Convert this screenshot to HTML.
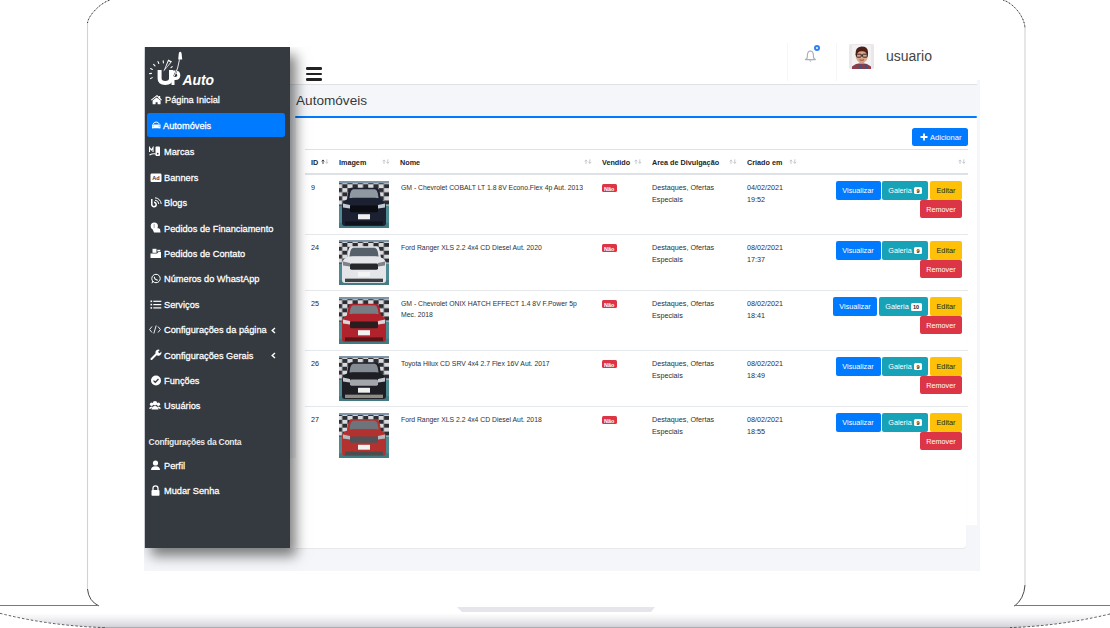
<!DOCTYPE html>
<html><head><meta charset="utf-8"><title>UP Auto</title>
<style>
html,body{margin:0;padding:0;}
body{width:1110px;height:628px;position:relative;overflow:hidden;background:#fff;font-family:"Liberation Sans", sans-serif;}
.a{position:absolute;}
.t{position:absolute;white-space:nowrap;line-height:1;}
</style></head><body>
<svg class="a" style="left:0;top:0" width="1110" height="628" viewBox="0 0 1110 628">
<defs>
<linearGradient id="base" x1="0" y1="0" x2="0" y2="1">
<stop offset="0" stop-color="#ffffff"/><stop offset="0.3" stop-color="#f4f4f6"/><stop offset="0.8" stop-color="#dcdbe0"/><stop offset="0.93" stop-color="#d2d1d7"/><stop offset="1" stop-color="#8c8a92"/>
</linearGradient>
</defs>
<path d="M87.5 589 L87.5 23" fill="none" stroke="#d2d2d2" stroke-width="1.1"/>
<path d="M87.5 23 C88 16 100 3 110 0" fill="none" stroke="#8a8a8a" stroke-width="0.7"/>
<path d="M87.5 23 C88 16 100 3 110 0" fill="none" stroke="#111" stroke-width="0.9" stroke-dasharray="0.9 2.6"/>
<path d="M1025 585 L1025 28" fill="none" stroke="#d2d2d2" stroke-width="1.1"/>
<path d="M1003 0 C1013 3 1024.5 16 1025 28" fill="none" stroke="#8a8a8a" stroke-width="0.7"/>
<path d="M1003 0 C1013 3 1024.5 16 1025 28" fill="none" stroke="#111" stroke-width="0.9" stroke-dasharray="0.9 2.6"/>
<path d="M87.5 589 Q88.5 601 99 606" fill="none" stroke="#333" stroke-width="0.9"/>
<path d="M1025 585 Q1024 599 1014.5 606" fill="none" stroke="#333" stroke-width="0.9"/>
<line x1="0" y1="605.5" x2="99" y2="605.5" stroke="#7a7a7a" stroke-width="1"/>
<line x1="1014" y1="605.5" x2="1110" y2="605.5" stroke="#7a7a7a" stroke-width="1"/>
<path d="M0 613 L1110 613 L1110 614 Q1060 626 1010 628 L105 628 Q50 626 0 613.3 Z" fill="url(#base)"/>
<path d="M0 613.3 Q50 626 105 627.6" fill="none" stroke="#333" stroke-width="0.8" stroke-dasharray="2.5 2"/>
<path d="M1110 614 Q1060 626 1010 627.6" fill="none" stroke="#333" stroke-width="0.8" stroke-dasharray="2.5 2"/>
<path d="M457 607 L655 607 L651 612 L462 612 Z" fill="#e6e5eb"/>
</svg>
<div class="a" style="left:144px;top:80px;width:836px;height:491px;background:#f4f6f9;"></div>
<div class="a" style="left:144px;top:47px;width:1px;height:501px;background:#d9dde3;"></div>
<div class="a" style="left:290px;top:45px;width:687px;height:39px;background:#ffffff;"></div>
<div class="a" style="left:290px;top:84px;width:687px;height:1px;background:#dee2e6;"></div>
<div class="a" style="left:295.5px;top:118px;width:681.5px;height:407px;background:#ffffff;"></div>
<div class="a" style="left:290px;top:458px;width:6px;height:90px;background:#ffffff;"></div>
<div class="a" style="left:295.5px;top:118px;width:670.5px;height:430px;background:#ffffff;border-bottom-right-radius:4px;box-shadow:0 1px 1px rgba(0,0,0,.06)"></div>
<div class="t" style="left:296.00px;top:93.89px;font-size:13.6px;color:#343a40;font-weight:normal;">Automóveis</div>
<div class="a" style="left:295px;top:116px;width:682px;height:2px;background:#007bff;border-radius:1px"></div>
<div class="a" style="left:305.5px;top:67px;width:16.2px;height:2.6px;background:#222;border-radius:1.3px"></div>
<div class="a" style="left:305.5px;top:72.6px;width:16.2px;height:2.6px;background:#222;border-radius:1.3px"></div>
<div class="a" style="left:305.5px;top:78.2px;width:16.2px;height:2.6px;background:#222;border-radius:1.3px"></div>
<div class="a" style="left:786.8px;top:43px;width:1.0px;height:38px;background:#f5f6f7;"></div>
<div class="a" style="left:835.6px;top:43px;width:1.0px;height:38px;background:#f5f6f7;"></div>
<svg class="a" style="left:803px;top:49px" width="16" height="15" viewBox="0 0 16 15">
<path d="M7.4 2 Q10.2 2.2 10.4 6 L10.6 8.8 Q11 10 12.4 10.6 L2.4 10.6 Q3.8 10 4.2 8.8 L4.4 6 Q4.6 2.2 7.4 2 Z" fill="none" stroke="#a9afb6" stroke-width="1.15" stroke-linejoin="round"/>
<path d="M6.2 11.6 L8.6 11.6 L7.4 13 Z" fill="#a9afb6"/>
</svg>
<div class="a" style="left:814.2px;top:44.8px;width:2.2px;height:2.2px;border:2px solid #2f7ff5;border-radius:50%;background:#fff"></div>
<svg class="a" style="left:849px;top:44px" width="25" height="25" viewBox="0 0 25 25">
<rect width="25" height="25" rx="1.5" fill="#e9e7e7"/>
<rect x="3" y="1" width="19" height="23" fill="#f3f1f1"/>
<path d="M7 20 Q12.5 18.5 18 20 L22 22.5 L22 25 L3 25 L3 22.5 Z" fill="#8b3d4a"/>
<path d="M9 21 L11 25 L13.5 25 L12 20.5 Z M15 20.5 L17 25 L19 25 L17.5 20.8 Z" fill="#3f5580"/>
<rect x="10.5" y="16" width="4.5" height="4" fill="#c98f77"/>
<ellipse cx="12.8" cy="11.4" rx="6.2" ry="7.4" fill="#dca68b"/>
<path d="M6.5 11 Q6 3 12.5 2.6 Q18.8 2.6 19 8 Q19.2 10 18.6 12 Q17.5 7 13 7.2 Q8 7 7.6 12 Z" fill="#4b2016"/>
<rect x="7.6" y="10.2" width="4.6" height="3" rx="0.8" fill="none" stroke="#2a1d1a" stroke-width="0.9"/><rect x="13.6" y="10.2" width="4.6" height="3" rx="0.8" fill="none" stroke="#2a1d1a" stroke-width="0.9"/><path d="M12.2 11 L13.6 11" stroke="#2a1d1a" stroke-width="0.8"/>
<path d="M10.5 15.8 Q12.8 16.8 15 15.8" fill="none" stroke="#8a3b30" stroke-width="0.9"/>
</svg>
<div class="t" style="left:886.00px;top:49.45px;font-size:14px;color:#444;font-weight:normal;">usuario</div>
<div class="a" style="left:912.4px;top:127.5px;width:55.60000000000002px;height:18.599999999999994px;background:#007bff;border-radius:2.5px"></div>
<svg class="a" style="left:919.5px;top:132.5px" width="8" height="8" viewBox="0 0 8 8"><path d="M4 0.5 L4 7.5 M0.5 4 L7.5 4" stroke="#fff" stroke-width="1.8"/></svg>
<div class="t" style="left:930.00px;top:133.51px;font-size:7.55px;color:#fff;font-weight:normal;">Adicionar</div>
<div class="a" style="left:305px;top:149px;width:663px;height:1px;background:#dee2e6;"></div>
<div class="a" style="left:305px;top:173px;width:663px;height:2px;background:#dee2e6;"></div>
<div class="t" style="left:311.20px;top:159.18px;font-size:7.7px;color:#212529;font-weight:bold;transform:scaleX(0.94);transform-origin:0 0;">ID</div>
<svg class="a" style="left:320.5px;top:159.4px" width="8" height="6" viewBox="0 0 8 6"><path d="M2 5 L2 1 M0.7 2.4 L2 0.9 L3.3 2.4" fill="none" stroke="#3a3f44" stroke-width="0.95"/><path d="M5.8 0.3 L5.8 4.3 M4.5 2.9 L5.8 4.4 L7.1 2.9" fill="none" stroke="#c3c7cb" stroke-width="0.95"/></svg>
<div class="t" style="left:339.10px;top:159.18px;font-size:7.7px;color:#212529;font-weight:bold;transform:scaleX(0.94);transform-origin:0 0;">Imagem</div>
<svg class="a" style="left:382px;top:159.4px" width="8" height="6" viewBox="0 0 8 6"><path d="M2 5 L2 1 M0.7 2.4 L2 0.9 L3.3 2.4" fill="none" stroke="#c3c7cb" stroke-width="0.95"/><path d="M5.8 0.3 L5.8 4.3 M4.5 2.9 L5.8 4.4 L7.1 2.9" fill="none" stroke="#c3c7cb" stroke-width="0.95"/></svg>
<div class="t" style="left:400.40px;top:159.18px;font-size:7.7px;color:#212529;font-weight:bold;transform:scaleX(0.94);transform-origin:0 0;">Nome</div>
<svg class="a" style="left:583.5px;top:159.4px" width="8" height="6" viewBox="0 0 8 6"><path d="M2 5 L2 1 M0.7 2.4 L2 0.9 L3.3 2.4" fill="none" stroke="#c3c7cb" stroke-width="0.95"/><path d="M5.8 0.3 L5.8 4.3 M4.5 2.9 L5.8 4.4 L7.1 2.9" fill="none" stroke="#c3c7cb" stroke-width="0.95"/></svg>
<div class="t" style="left:601.90px;top:159.18px;font-size:7.7px;color:#212529;font-weight:bold;transform:scaleX(0.94);transform-origin:0 0;">Vendido</div>
<svg class="a" style="left:633.7px;top:159.4px" width="8" height="6" viewBox="0 0 8 6"><path d="M2 5 L2 1 M0.7 2.4 L2 0.9 L3.3 2.4" fill="none" stroke="#c3c7cb" stroke-width="0.95"/><path d="M5.8 0.3 L5.8 4.3 M4.5 2.9 L5.8 4.4 L7.1 2.9" fill="none" stroke="#c3c7cb" stroke-width="0.95"/></svg>
<div class="t" style="left:651.50px;top:159.18px;font-size:7.7px;color:#212529;font-weight:bold;transform:scaleX(0.94);transform-origin:0 0;">Area de Divulgação</div>
<svg class="a" style="left:728.8px;top:159.4px" width="8" height="6" viewBox="0 0 8 6"><path d="M2 5 L2 1 M0.7 2.4 L2 0.9 L3.3 2.4" fill="none" stroke="#c3c7cb" stroke-width="0.95"/><path d="M5.8 0.3 L5.8 4.3 M4.5 2.9 L5.8 4.4 L7.1 2.9" fill="none" stroke="#c3c7cb" stroke-width="0.95"/></svg>
<div class="t" style="left:746.60px;top:159.18px;font-size:7.7px;color:#212529;font-weight:bold;transform:scaleX(0.94);transform-origin:0 0;">Criado em</div>
<svg class="a" style="left:789.2px;top:159.4px" width="8" height="6" viewBox="0 0 8 6"><path d="M2 5 L2 1 M0.7 2.4 L2 0.9 L3.3 2.4" fill="none" stroke="#c3c7cb" stroke-width="0.95"/><path d="M5.8 0.3 L5.8 4.3 M4.5 2.9 L5.8 4.4 L7.1 2.9" fill="none" stroke="#c3c7cb" stroke-width="0.95"/></svg>
<svg class="a" style="left:957.5px;top:159.4px" width="8" height="6" viewBox="0 0 8 6"><path d="M2 5 L2 1 M0.7 2.4 L2 0.9 L3.3 2.4" fill="none" stroke="#c3c7cb" stroke-width="0.95"/><path d="M5.8 0.3 L5.8 4.3 M4.5 2.9 L5.8 4.4 L7.1 2.9" fill="none" stroke="#c3c7cb" stroke-width="0.95"/></svg>
<div class="t" style="left:310.90px;top:183.65px;font-size:7.5px;color:#212529;font-weight:normal;transform:scaleX(0.96);transform-origin:0 0;">9</div>
<svg class="a" style="left:339px;top:181px" width="50" height="47" viewBox="0 0 50 46" preserveAspectRatio="none">
<defs><pattern id="chk181" width="10.4" height="8" patternUnits="userSpaceOnUse" x="-2" y="-1"><rect width="10.4" height="8" fill="#d9dade"/><rect width="5.2" height="4" fill="#2d2e33"/><rect x="5.2" y="4" width="5.2" height="4" fill="#2d2e33"/></pattern></defs>
<rect width="50" height="46" fill="#4f8a92"/><rect width="50" height="2" fill="#7f95a8"/>
<rect y="2" width="50" height="22" fill="url(#chk181)"/>
<rect y="41" width="50" height="5" fill="#3c727a" opacity="0.6"/>
<path d="M12 6.5 L38 6.5 Q40 7 41 12 L42 19 L8 19 L9 12 Q10 7 12 6.5 Z" fill="#1b2131"/>
<path d="M14 8 L36 8 Q38 8.5 38.8 12 L39.6 17 L10.4 17 L11.2 12 Q12 8.5 14 8 Z" fill="#8f98a1"/>
<path d="M6 19 Q9 16.5 14 16.5 L36 16.5 Q41 16.5 44 19 Q47 21 47 25 L47 41 Q47 44 44 44 L6 44 Q3 44 3 41 L3 25 Q3 21 6 19 Z" fill="#1b2131"/>
<rect x="11" y="24" width="28" height="6.5" rx="1.5" fill="#0b0d12"/>
<path d="M4 22 L11 23.5 L11 27 L4 26 Z" fill="#c3c9d0"/>
<path d="M46 22 L39 23.5 L39 27 L46 26 Z" fill="#c3c9d0"/>
<rect x="19" y="32.5" width="12" height="5" fill="#f0f0f0"/>
<rect x="6" y="39.5" width="38" height="3.5" fill="#10131b"/>
</svg>
<div class="t" style="left:400.60px;top:183.65px;font-size:7.5px;color:#2b3035;font-weight:normal;transform:scaleX(0.91);transform-origin:0 0;">GM - Chevrolet COBALT LT 1.8 8V Econo.Flex 4p Aut. 2013</div>
<div class="a" style="left:601.9px;top:183.6px;width:15px;height:8.5px;background:#dc3545;border-radius:1.5px"></div>
<div class="t" style="left:604.40px;top:186.15px;font-size:6.2px;color:#fff;font-weight:bold;transform:scaleX(0.88);transform-origin:0 0;">Não</div>
<div class="t" style="left:651.50px;top:183.65px;font-size:7.5px;color:#2b3035;font-weight:normal;transform:scaleX(0.96);transform-origin:0 0;">Destaques, Ofertas</div>
<div class="t" style="left:651.50px;top:195.55px;font-size:7.5px;color:#2b3035;font-weight:normal;transform:scaleX(0.96);transform-origin:0 0;">Especiais</div>
<div class="t" style="left:746.60px;top:183.65px;font-size:7.5px;color:#2b3035;font-weight:normal;transform:scaleX(0.96);transform-origin:0 0;">04/02/2021</div>
<div class="t" style="left:746.60px;top:195.55px;font-size:7.5px;color:#2b3035;font-weight:normal;transform:scaleX(0.96);transform-origin:0 0;">19:52</div>
<div class="a" style="left:836px;top:181.2px;width:44.700000000000045px;height:18.69999999999999px;background:#007bff;border-radius:2px"></div>
<div class="t" style="left:798.35px;top:187.00px;width:120px;text-align:center;font-size:7.8px;color:#fff;font-weight:normal;transform:scaleX(0.93);transform-origin:50% 0;">Visualizar</div>
<div class="a" style="left:882.1px;top:181.2px;width:45.89999999999998px;height:18.69999999999999px;background:#17a2b8;border-radius:2px"></div>
<div class="t" style="left:840.30px;top:187.00px;width:120px;text-align:center;font-size:7.8px;color:#fff;font-weight:normal;transform:scaleX(0.93);transform-origin:50% 0;">Galeria</div>
<div class="a" style="left:913.9px;top:186.89999999999998px;width:7.800000000000068px;height:7.600000000000023px;background:#fff;border-radius:1.5px"></div>
<div class="t" style="left:857.80px;top:189.19px;width:120px;text-align:center;font-size:5.8px;color:#212529;font-weight:bold;transform:scaleX(0.95);transform-origin:50% 0;">9</div>
<div class="a" style="left:929.7px;top:181.2px;width:32.5px;height:18.69999999999999px;background:#ffc107;border-radius:2px"></div>
<div class="t" style="left:885.95px;top:187.00px;width:120px;text-align:center;font-size:7.8px;color:#212529;font-weight:normal;transform:scaleX(0.93);transform-origin:50% 0;">Editar</div>
<div class="a" style="left:920px;top:200.1px;width:42.200000000000045px;height:18.19999999999999px;background:#dc3545;border-radius:2px"></div>
<div class="t" style="left:881.10px;top:205.70px;width:120px;text-align:center;font-size:7.8px;color:#fff;font-weight:normal;transform:scaleX(0.93);transform-origin:50% 0;">Remover</div>
<div class="a" style="left:305px;top:234px;width:663px;height:1px;background:#e6e9ec;"></div>
<div class="t" style="left:310.90px;top:243.65px;font-size:7.5px;color:#212529;font-weight:normal;transform:scaleX(0.96);transform-origin:0 0;">24</div>
<svg class="a" style="left:339px;top:240px" width="50" height="45" viewBox="0 0 50 46" preserveAspectRatio="none">
<defs><pattern id="chk240" width="10.4" height="8" patternUnits="userSpaceOnUse" x="-2" y="-1"><rect width="10.4" height="8" fill="#d9dade"/><rect width="5.2" height="4" fill="#2d2e33"/><rect x="5.2" y="4" width="5.2" height="4" fill="#2d2e33"/></pattern></defs>
<rect width="50" height="46" fill="#4f8a92"/><rect width="50" height="2" fill="#7f95a8"/>
<rect y="2" width="50" height="22" fill="url(#chk240)"/>
<rect y="41" width="50" height="5" fill="#3c727a" opacity="0.6"/>
<path d="M12 6.5 L38 6.5 Q40 7 41 12 L42 19 L8 19 L9 12 Q10 7 12 6.5 Z" fill="#e4e5e8"/>
<path d="M14 8 L36 8 Q38 8.5 38.8 12 L39.6 17 L10.4 17 L11.2 12 Q12 8.5 14 8 Z" fill="#55606b"/>
<path d="M6 19 Q9 16.5 14 16.5 L36 16.5 Q41 16.5 44 19 Q47 21 47 25 L47 41 Q47 44 44 44 L6 44 Q3 44 3 41 L3 25 Q3 21 6 19 Z" fill="#e4e5e8"/>
<rect x="11" y="24" width="28" height="6.5" rx="1.5" fill="#24272c"/>
<path d="M4 22 L11 23.5 L11 27 L4 26 Z" fill="#7d828a"/>
<path d="M46 22 L39 23.5 L39 27 L46 26 Z" fill="#7d828a"/>
<rect x="19" y="32.5" width="12" height="5" fill="#f5f5f5"/>
<rect x="6" y="39.5" width="38" height="3.5" fill="#3b3f44"/>
</svg>
<div class="t" style="left:400.60px;top:243.65px;font-size:7.5px;color:#2b3035;font-weight:normal;transform:scaleX(0.91);transform-origin:0 0;">Ford Ranger XLS 2.2 4x4 CD Diesel Aut. 2020</div>
<div class="a" style="left:601.9px;top:243.6px;width:15px;height:8.5px;background:#dc3545;border-radius:1.5px"></div>
<div class="t" style="left:604.40px;top:246.15px;font-size:6.2px;color:#fff;font-weight:bold;transform:scaleX(0.88);transform-origin:0 0;">Não</div>
<div class="t" style="left:651.50px;top:243.65px;font-size:7.5px;color:#2b3035;font-weight:normal;transform:scaleX(0.96);transform-origin:0 0;">Destaques, Ofertas</div>
<div class="t" style="left:651.50px;top:255.55px;font-size:7.5px;color:#2b3035;font-weight:normal;transform:scaleX(0.96);transform-origin:0 0;">Especiais</div>
<div class="t" style="left:746.60px;top:243.65px;font-size:7.5px;color:#2b3035;font-weight:normal;transform:scaleX(0.96);transform-origin:0 0;">08/02/2021</div>
<div class="t" style="left:746.60px;top:255.55px;font-size:7.5px;color:#2b3035;font-weight:normal;transform:scaleX(0.96);transform-origin:0 0;">17:37</div>
<div class="a" style="left:836px;top:241.2px;width:44.700000000000045px;height:18.69999999999999px;background:#007bff;border-radius:2px"></div>
<div class="t" style="left:798.35px;top:247.00px;width:120px;text-align:center;font-size:7.8px;color:#fff;font-weight:normal;transform:scaleX(0.93);transform-origin:50% 0;">Visualizar</div>
<div class="a" style="left:882.1px;top:241.2px;width:45.89999999999998px;height:18.69999999999999px;background:#17a2b8;border-radius:2px"></div>
<div class="t" style="left:840.30px;top:247.00px;width:120px;text-align:center;font-size:7.8px;color:#fff;font-weight:normal;transform:scaleX(0.93);transform-origin:50% 0;">Galeria</div>
<div class="a" style="left:913.9px;top:246.89999999999998px;width:7.800000000000068px;height:7.600000000000023px;background:#fff;border-radius:1.5px"></div>
<div class="t" style="left:857.80px;top:249.19px;width:120px;text-align:center;font-size:5.8px;color:#212529;font-weight:bold;transform:scaleX(0.95);transform-origin:50% 0;">9</div>
<div class="a" style="left:929.7px;top:241.2px;width:32.5px;height:18.69999999999999px;background:#ffc107;border-radius:2px"></div>
<div class="t" style="left:885.95px;top:247.00px;width:120px;text-align:center;font-size:7.8px;color:#212529;font-weight:normal;transform:scaleX(0.93);transform-origin:50% 0;">Editar</div>
<div class="a" style="left:920px;top:260.09999999999997px;width:42.200000000000045px;height:18.200000000000045px;background:#dc3545;border-radius:2px"></div>
<div class="t" style="left:881.10px;top:265.70px;width:120px;text-align:center;font-size:7.8px;color:#fff;font-weight:normal;transform:scaleX(0.93);transform-origin:50% 0;">Remover</div>
<div class="a" style="left:305px;top:290px;width:663px;height:1px;background:#e6e9ec;"></div>
<div class="t" style="left:310.90px;top:299.65px;font-size:7.5px;color:#212529;font-weight:normal;transform:scaleX(0.96);transform-origin:0 0;">25</div>
<svg class="a" style="left:339px;top:297px" width="50" height="47" viewBox="0 0 50 46" preserveAspectRatio="none">
<defs><pattern id="chk297" width="10.4" height="8" patternUnits="userSpaceOnUse" x="-2" y="-1"><rect width="10.4" height="8" fill="#d9dade"/><rect width="5.2" height="4" fill="#2d2e33"/><rect x="5.2" y="4" width="5.2" height="4" fill="#2d2e33"/></pattern></defs>
<rect width="50" height="46" fill="#4f8a92"/><rect width="50" height="2" fill="#7f95a8"/>
<rect y="2" width="50" height="22" fill="url(#chk297)"/>
<rect y="41" width="50" height="5" fill="#3c727a" opacity="0.6"/>
<path d="M12 6.5 L38 6.5 Q40 7 41 12 L42 19 L8 19 L9 12 Q10 7 12 6.5 Z" fill="#b1232c"/>
<path d="M14 8 L36 8 Q38 8.5 38.8 12 L39.6 17 L10.4 17 L11.2 12 Q12 8.5 14 8 Z" fill="#787d84"/>
<path d="M6 19 Q9 16.5 14 16.5 L36 16.5 Q41 16.5 44 19 Q47 21 47 25 L47 41 Q47 44 44 44 L6 44 Q3 44 3 41 L3 25 Q3 21 6 19 Z" fill="#b1232c"/>
<rect x="11" y="24" width="28" height="6.5" rx="1.5" fill="#2b1c1e"/>
<path d="M4 22 L11 23.5 L11 27 L4 26 Z" fill="#d5d6da"/>
<path d="M46 22 L39 23.5 L39 27 L46 26 Z" fill="#d5d6da"/>
<rect x="19" y="32.5" width="12" height="5" fill="#f2f2f2"/>
<rect x="6" y="39.5" width="38" height="3.5" fill="#5a1418"/>
</svg>
<div class="t" style="left:400.60px;top:299.65px;font-size:7.5px;color:#2b3035;font-weight:normal;transform:scaleX(0.91);transform-origin:0 0;">GM - Chevrolet ONIX HATCH EFFECT 1.4 8V F.Power 5p</div>
<div class="t" style="left:400.60px;top:311.45px;font-size:7.5px;color:#2b3035;font-weight:normal;transform:scaleX(0.91);transform-origin:0 0;">Mec. 2018</div>
<div class="a" style="left:601.9px;top:299.6px;width:15px;height:8.5px;background:#dc3545;border-radius:1.5px"></div>
<div class="t" style="left:604.40px;top:302.15px;font-size:6.2px;color:#fff;font-weight:bold;transform:scaleX(0.88);transform-origin:0 0;">Não</div>
<div class="t" style="left:651.50px;top:299.65px;font-size:7.5px;color:#2b3035;font-weight:normal;transform:scaleX(0.96);transform-origin:0 0;">Destaques, Ofertas</div>
<div class="t" style="left:651.50px;top:311.55px;font-size:7.5px;color:#2b3035;font-weight:normal;transform:scaleX(0.96);transform-origin:0 0;">Especiais</div>
<div class="t" style="left:746.60px;top:299.65px;font-size:7.5px;color:#2b3035;font-weight:normal;transform:scaleX(0.96);transform-origin:0 0;">08/02/2021</div>
<div class="t" style="left:746.60px;top:311.55px;font-size:7.5px;color:#2b3035;font-weight:normal;transform:scaleX(0.96);transform-origin:0 0;">18:41</div>
<div class="a" style="left:833.1px;top:297.2px;width:43.89999999999998px;height:18.69999999999999px;background:#007bff;border-radius:2px"></div>
<div class="t" style="left:795.05px;top:303.00px;width:120px;text-align:center;font-size:7.8px;color:#fff;font-weight:normal;transform:scaleX(0.93);transform-origin:50% 0;">Visualizar</div>
<div class="a" style="left:879.2px;top:297.2px;width:48.59999999999991px;height:18.69999999999999px;background:#17a2b8;border-radius:2px"></div>
<div class="t" style="left:837.20px;top:303.00px;width:120px;text-align:center;font-size:7.8px;color:#fff;font-weight:normal;transform:scaleX(0.93);transform-origin:50% 0;">Galeria</div>
<div class="a" style="left:910.6px;top:303.4px;width:11.100000000000023px;height:7.800000000000011px;background:#fff;border-radius:1.5px"></div>
<div class="t" style="left:856.20px;top:305.19px;width:120px;text-align:center;font-size:5.8px;color:#212529;font-weight:bold;transform:scaleX(0.95);transform-origin:50% 0;">10</div>
<div class="a" style="left:929.7px;top:297.2px;width:32.5px;height:18.69999999999999px;background:#ffc107;border-radius:2px"></div>
<div class="t" style="left:885.95px;top:303.00px;width:120px;text-align:center;font-size:7.8px;color:#212529;font-weight:normal;transform:scaleX(0.93);transform-origin:50% 0;">Editar</div>
<div class="a" style="left:920px;top:316.09999999999997px;width:42.200000000000045px;height:18.200000000000045px;background:#dc3545;border-radius:2px"></div>
<div class="t" style="left:881.10px;top:321.70px;width:120px;text-align:center;font-size:7.8px;color:#fff;font-weight:normal;transform:scaleX(0.93);transform-origin:50% 0;">Remover</div>
<div class="a" style="left:305px;top:350px;width:663px;height:1px;background:#e6e9ec;"></div>
<div class="t" style="left:310.90px;top:359.65px;font-size:7.5px;color:#212529;font-weight:normal;transform:scaleX(0.96);transform-origin:0 0;">26</div>
<svg class="a" style="left:339px;top:356px" width="50" height="45" viewBox="0 0 50 46" preserveAspectRatio="none">
<defs><pattern id="chk356" width="10.4" height="8" patternUnits="userSpaceOnUse" x="-2" y="-1"><rect width="10.4" height="8" fill="#d9dade"/><rect width="5.2" height="4" fill="#2d2e33"/><rect x="5.2" y="4" width="5.2" height="4" fill="#2d2e33"/></pattern></defs>
<rect width="50" height="46" fill="#4f8a92"/><rect width="50" height="2" fill="#7f95a8"/>
<rect y="2" width="50" height="22" fill="url(#chk356)"/>
<rect y="41" width="50" height="5" fill="#3c727a" opacity="0.6"/>
<path d="M12 6.5 L38 6.5 Q40 7 41 12 L42 19 L8 19 L9 12 Q10 7 12 6.5 Z" fill="#1d1f24"/>
<path d="M14 8 L36 8 Q38 8.5 38.8 12 L39.6 17 L10.4 17 L11.2 12 Q12 8.5 14 8 Z" fill="#858b93"/>
<path d="M6 19 Q9 16.5 14 16.5 L36 16.5 Q41 16.5 44 19 Q47 21 47 25 L47 41 Q47 44 44 44 L6 44 Q3 44 3 41 L3 25 Q3 21 6 19 Z" fill="#1d1f24"/>
<rect x="11" y="24" width="28" height="6.5" rx="1.5" fill="#a3a7ac"/>
<path d="M4 22 L11 23.5 L11 27 L4 26 Z" fill="#c6cad0"/>
<path d="M46 22 L39 23.5 L39 27 L46 26 Z" fill="#c6cad0"/>
<rect x="19" y="32.5" width="12" height="5" fill="#efefef"/>
<rect x="6" y="39.5" width="38" height="3.5" fill="#8f8c84"/>
</svg>
<div class="t" style="left:400.60px;top:359.65px;font-size:7.5px;color:#2b3035;font-weight:normal;transform:scaleX(0.91);transform-origin:0 0;">Toyota Hilux CD SRV 4x4 2.7 Flex 16V Aut. 2017</div>
<div class="a" style="left:601.9px;top:359.6px;width:15px;height:8.5px;background:#dc3545;border-radius:1.5px"></div>
<div class="t" style="left:604.40px;top:362.15px;font-size:6.2px;color:#fff;font-weight:bold;transform:scaleX(0.88);transform-origin:0 0;">Não</div>
<div class="t" style="left:651.50px;top:359.65px;font-size:7.5px;color:#2b3035;font-weight:normal;transform:scaleX(0.96);transform-origin:0 0;">Destaques, Ofertas</div>
<div class="t" style="left:651.50px;top:371.55px;font-size:7.5px;color:#2b3035;font-weight:normal;transform:scaleX(0.96);transform-origin:0 0;">Especiais</div>
<div class="t" style="left:746.60px;top:359.65px;font-size:7.5px;color:#2b3035;font-weight:normal;transform:scaleX(0.96);transform-origin:0 0;">08/02/2021</div>
<div class="t" style="left:746.60px;top:371.55px;font-size:7.5px;color:#2b3035;font-weight:normal;transform:scaleX(0.96);transform-origin:0 0;">18:49</div>
<div class="a" style="left:836px;top:357.2px;width:44.700000000000045px;height:18.69999999999999px;background:#007bff;border-radius:2px"></div>
<div class="t" style="left:798.35px;top:363.00px;width:120px;text-align:center;font-size:7.8px;color:#fff;font-weight:normal;transform:scaleX(0.93);transform-origin:50% 0;">Visualizar</div>
<div class="a" style="left:882.1px;top:357.2px;width:45.89999999999998px;height:18.69999999999999px;background:#17a2b8;border-radius:2px"></div>
<div class="t" style="left:840.30px;top:363.00px;width:120px;text-align:center;font-size:7.8px;color:#fff;font-weight:normal;transform:scaleX(0.93);transform-origin:50% 0;">Galeria</div>
<div class="a" style="left:913.9px;top:362.9px;width:7.800000000000068px;height:7.600000000000023px;background:#fff;border-radius:1.5px"></div>
<div class="t" style="left:857.80px;top:365.19px;width:120px;text-align:center;font-size:5.8px;color:#212529;font-weight:bold;transform:scaleX(0.95);transform-origin:50% 0;">9</div>
<div class="a" style="left:929.7px;top:357.2px;width:32.5px;height:18.69999999999999px;background:#ffc107;border-radius:2px"></div>
<div class="t" style="left:885.95px;top:363.00px;width:120px;text-align:center;font-size:7.8px;color:#212529;font-weight:normal;transform:scaleX(0.93);transform-origin:50% 0;">Editar</div>
<div class="a" style="left:920px;top:376.09999999999997px;width:42.200000000000045px;height:18.200000000000045px;background:#dc3545;border-radius:2px"></div>
<div class="t" style="left:881.10px;top:381.70px;width:120px;text-align:center;font-size:7.8px;color:#fff;font-weight:normal;transform:scaleX(0.93);transform-origin:50% 0;">Remover</div>
<div class="a" style="left:305px;top:406px;width:663px;height:1px;background:#e6e9ec;"></div>
<div class="t" style="left:310.90px;top:415.65px;font-size:7.5px;color:#212529;font-weight:normal;transform:scaleX(0.96);transform-origin:0 0;">27</div>
<svg class="a" style="left:339px;top:413px" width="50" height="45" viewBox="0 0 50 46" preserveAspectRatio="none">
<defs><pattern id="chk413" width="10.4" height="8" patternUnits="userSpaceOnUse" x="-2" y="-1"><rect width="10.4" height="8" fill="#d9dade"/><rect width="5.2" height="4" fill="#2d2e33"/><rect x="5.2" y="4" width="5.2" height="4" fill="#2d2e33"/></pattern></defs>
<rect width="50" height="46" fill="#4f8a92"/><rect width="50" height="2" fill="#7f95a8"/>
<rect y="2" width="50" height="22" fill="url(#chk413)"/>
<rect y="41" width="50" height="5" fill="#3c727a" opacity="0.6"/>
<path d="M12 6.5 L38 6.5 Q40 7 41 12 L42 19 L8 19 L9 12 Q10 7 12 6.5 Z" fill="#b3312f"/>
<path d="M14 8 L36 8 Q38 8.5 38.8 12 L39.6 17 L10.4 17 L11.2 12 Q12 8.5 14 8 Z" fill="#6e747b"/>
<path d="M6 19 Q9 16.5 14 16.5 L36 16.5 Q41 16.5 44 19 Q47 21 47 25 L47 41 Q47 44 44 44 L6 44 Q3 44 3 41 L3 25 Q3 21 6 19 Z" fill="#b3312f"/>
<rect x="11" y="24" width="28" height="6.5" rx="1.5" fill="#505257"/>
<path d="M4 22 L11 23.5 L11 27 L4 26 Z" fill="#b5bac0"/>
<path d="M46 22 L39 23.5 L39 27 L46 26 Z" fill="#b5bac0"/>
<rect x="19" y="32.5" width="12" height="5" fill="#f2f2f2"/>
<rect x="6" y="39.5" width="38" height="3.5" fill="#4a4c50"/>
</svg>
<div class="t" style="left:400.60px;top:415.65px;font-size:7.5px;color:#2b3035;font-weight:normal;transform:scaleX(0.91);transform-origin:0 0;">Ford Ranger XLS 2.2 4x4 CD Diesel Aut. 2018</div>
<div class="a" style="left:601.9px;top:415.6px;width:15px;height:8.5px;background:#dc3545;border-radius:1.5px"></div>
<div class="t" style="left:604.40px;top:418.15px;font-size:6.2px;color:#fff;font-weight:bold;transform:scaleX(0.88);transform-origin:0 0;">Não</div>
<div class="t" style="left:651.50px;top:415.65px;font-size:7.5px;color:#2b3035;font-weight:normal;transform:scaleX(0.96);transform-origin:0 0;">Destaques, Ofertas</div>
<div class="t" style="left:651.50px;top:427.55px;font-size:7.5px;color:#2b3035;font-weight:normal;transform:scaleX(0.96);transform-origin:0 0;">Especiais</div>
<div class="t" style="left:746.60px;top:415.65px;font-size:7.5px;color:#2b3035;font-weight:normal;transform:scaleX(0.96);transform-origin:0 0;">08/02/2021</div>
<div class="t" style="left:746.60px;top:427.55px;font-size:7.5px;color:#2b3035;font-weight:normal;transform:scaleX(0.96);transform-origin:0 0;">18:55</div>
<div class="a" style="left:836px;top:413.2px;width:44.700000000000045px;height:18.69999999999999px;background:#007bff;border-radius:2px"></div>
<div class="t" style="left:798.35px;top:419.00px;width:120px;text-align:center;font-size:7.8px;color:#fff;font-weight:normal;transform:scaleX(0.93);transform-origin:50% 0;">Visualizar</div>
<div class="a" style="left:882.1px;top:413.2px;width:45.89999999999998px;height:18.69999999999999px;background:#17a2b8;border-radius:2px"></div>
<div class="t" style="left:840.30px;top:419.00px;width:120px;text-align:center;font-size:7.8px;color:#fff;font-weight:normal;transform:scaleX(0.93);transform-origin:50% 0;">Galeria</div>
<div class="a" style="left:913.9px;top:418.9px;width:7.800000000000068px;height:7.600000000000023px;background:#fff;border-radius:1.5px"></div>
<div class="t" style="left:857.80px;top:421.19px;width:120px;text-align:center;font-size:5.8px;color:#212529;font-weight:bold;transform:scaleX(0.95);transform-origin:50% 0;">9</div>
<div class="a" style="left:929.7px;top:413.2px;width:32.5px;height:18.69999999999999px;background:#ffc107;border-radius:2px"></div>
<div class="t" style="left:885.95px;top:419.00px;width:120px;text-align:center;font-size:7.8px;color:#212529;font-weight:normal;transform:scaleX(0.93);transform-origin:50% 0;">Editar</div>
<div class="a" style="left:920px;top:432.09999999999997px;width:42.200000000000045px;height:18.200000000000045px;background:#dc3545;border-radius:2px"></div>
<div class="t" style="left:881.10px;top:437.70px;width:120px;text-align:center;font-size:7.8px;color:#fff;font-weight:normal;transform:scaleX(0.93);transform-origin:50% 0;">Remover</div>
<div class="a" style="left:144px;top:47px;width:836px;height:524px;overflow:hidden"><div class="a" style="left:-144px;top:-47px;width:1110px;height:628px">
<div class="a" style="left:145px;top:47px;width:145px;height:501px;background:#343a40;box-shadow:6px 8px 12px rgba(0,0,0,.5)"></div>
<div class="a" style="left:147px;top:113.3px;width:138.39999999999998px;height:23.500000000000014px;background:#007bff;border-radius:2.5px"></div>
<svg class="a" style="left:147px;top:50px" width="70" height="38" viewBox="0 0 70 38">
<g stroke="#fff" stroke-width="1.1" stroke-linecap="round">
<line x1="3.5" y1="28.6" x2="5.2" y2="27.6"/>
<line x1="2.6" y1="23.6" x2="4.5" y2="23.4"/>
<line x1="3.6" y1="18.6" x2="5.4" y2="19.4"/>
<line x1="6.6" y1="14.4" x2="8" y2="15.9"/>
<line x1="11" y1="11.6" x2="11.8" y2="13.5"/>
<line x1="16.2" y1="10.8" x2="16.4" y2="12.9"/>
<line x1="24" y1="17.6" x2="25.2" y2="16.6"/>
</g>
<path d="M16.3 21.8 L21.2 9.6 L25 11.6 Z" fill="#fff"/>
<path d="M18.2 19 L21.6 11.3 L23.4 12.2 Z" fill="#343a40"/>
<path d="M12.6 20 L12.6 28.6 Q12.6 32.9 18.3 32.9 Q24 32.9 24 28.6 L24 20" fill="none" stroke="#fff" stroke-width="4"/>
<path d="M26 35 L26 22 L28.4 22 Q31.8 22 31.8 25.2 Q31.8 28.4 28.4 28.4 L26 28.4" fill="none" stroke="#fff" stroke-width="3"/>
<path d="M27 26.5 Q31.5 18 32.5 9.5" fill="none" stroke="#343a40" stroke-width="1.7"/>
<path d="M27 26.5 Q31.5 18 32.5 9.5" fill="none" stroke="#fff" stroke-width="0.9"/>
<path d="M31.2 9.4 L31.6 5.2 Q31.8 1.8 33.2 1.8 Q34.6 1.8 34.8 5.2 L35.2 9.4 Z" fill="#fff"/>
</svg>
<div class="t" style="left:182.40px;top:73.83px;font-size:13.9px;color:#fff;font-weight:bold;font-style:italic">Auto</div>
<svg class="a" style="left:149.5px;top:93.5px" width="12" height="11" viewBox="0 0 12 11"><path d="M1.3 6.1 L7 1.6 L11.5 6.1" fill="none" stroke="#fff" stroke-width="1.1" stroke-linejoin="round"/><rect x="8.6" y="2" width="1.6" height="2.8" fill="#fff"/><path d="M2.6 6.6 L6.6 3.4 L10.6 6.6 L10.6 10.3 L7.6 10.3 L7.6 8.2 L5.6 8.2 L5.6 10.3 L2.6 10.3 Z" fill="#fff"/></svg>
<div class="t" style="left:164.50px;top:94.62px;font-size:9.9px;color:#fff;font-weight:normal;transform:scaleX(0.935);transform-origin:0 0;-webkit-text-stroke:0.28px #fff">Página Inicial</div>
<svg class="a" style="left:149.5px;top:119.80000000000001px" width="12" height="11" viewBox="0 0 12 11"><path d="M3.2 4 Q4 2 6.2 2 Q8.4 2 9.2 4" fill="none" stroke="#fff" stroke-width="1"/><path d="M2 4.6 L10.5 4.6 L10.5 8.3 L9.7 8.6 L8.8 8.3 L3.7 8.3 L2.8 8.6 L2 8.3 Z" fill="#fff"/><rect x="2.5" y="5.6" width="1.4" height="1.2" fill="#9cc8ff"/><rect x="8.6" y="5.6" width="1.4" height="1.2" fill="#9cc8ff"/></svg>
<div class="t" style="left:162.80px;top:120.92px;font-size:9.9px;color:#fff;font-weight:normal;transform:scaleX(0.935);transform-origin:0 0;-webkit-text-stroke:0.28px #fff">Automóveis</div>
<svg class="a" style="left:149px;top:145.6px" width="12" height="11" viewBox="0 0 12 11"><path d="M0.5 6 L0.5 1.5 L2.3 4 L4 1.5 L4 6" fill="none" stroke="#fff" stroke-width="1.1"/><path d="M0.5 9 Q4 7.2 7 8" fill="none" stroke="#fff" stroke-width="1.2"/><rect x="6.5" y="0.5" width="4.5" height="9.5" rx="1" fill="#fff"/><circle cx="8.7" cy="7.7" r="0.9" fill="#343a40"/></svg>
<div class="t" style="left:163.70px;top:146.72px;font-size:9.9px;color:#fff;font-weight:normal;transform:scaleX(0.935);transform-origin:0 0;-webkit-text-stroke:0.28px #fff">Marcas</div>
<svg class="a" style="left:149.5px;top:171.5px" width="12" height="11" viewBox="0 0 12 11"><rect x="0.5" y="1.5" width="11" height="8.5" rx="1.2" fill="#fff"/><text x="6" y="8.3" font-family="Liberation Sans" font-weight="bold" font-size="5.5" text-anchor="middle" fill="#343a40">Ad</text></svg>
<div class="t" style="left:163.70px;top:172.62px;font-size:9.9px;color:#fff;font-weight:normal;transform:scaleX(0.935);transform-origin:0 0;-webkit-text-stroke:0.28px #fff">Banners</div>
<svg class="a" style="left:150px;top:196.8px" width="12" height="11" viewBox="0 0 12 11"><path d="M1.8 2 L1.8 7.5 A2.2 2.2 0 1 0 4 5.3" fill="none" stroke="#fff" stroke-width="1.5"/><path d="M5 3.2 A4 4 0 0 1 8.8 7" fill="none" stroke="#fff" stroke-width="1"/><path d="M5 0.8 A6.5 6.5 0 0 1 11.2 7" fill="none" stroke="#fff" stroke-width="1"/></svg>
<div class="t" style="left:163.70px;top:197.92px;font-size:9.9px;color:#fff;font-weight:normal;transform:scaleX(0.935);transform-origin:0 0;-webkit-text-stroke:0.28px #fff">Blogs</div>
<svg class="a" style="left:150px;top:222.4px" width="12" height="11" viewBox="0 0 12 11"><circle cx="4.3" cy="4" r="3.6" fill="#fff"/><path d="M2.5 7 Q7 5 10 7 L10.5 10.5 L4 10.5 Z" fill="#fff"/><path d="M3.5 3 L5 3 M3.5 5 L5 5" stroke="#343a40" stroke-width="0.6"/></svg>
<div class="t" style="left:163.70px;top:223.52px;font-size:9.9px;color:#fff;font-weight:normal;transform:scaleX(0.935);transform-origin:0 0;-webkit-text-stroke:0.28px #fff">Pedidos de Financiamento</div>
<svg class="a" style="left:149.5px;top:247.7px" width="12" height="11" viewBox="0 0 12 11"><rect x="2.5" y="0.8" width="4" height="4" fill="#fff"/><path d="M0.5 5.5 L7 5.5 L8.5 4 L11 4 L11 10 L0.5 10 Z" fill="#fff"/><rect x="7.3" y="1.8" width="3" height="1.6" fill="#fff"/></svg>
<div class="t" style="left:163.70px;top:248.82px;font-size:9.9px;color:#fff;font-weight:normal;transform:scaleX(0.935);transform-origin:0 0;-webkit-text-stroke:0.28px #fff">Pedidos de Contato</div>
<svg class="a" style="left:149.5px;top:273.1px" width="12" height="11" viewBox="0 0 12 11"><circle cx="6" cy="5.5" r="4.2" fill="none" stroke="#fff" stroke-width="1"/><path d="M2 10.2 L2.8 8" stroke="#fff" stroke-width="1"/><path d="M4.3 3.8 Q4.5 6.8 7.8 7.2" fill="none" stroke="#fff" stroke-width="1.1"/></svg>
<div class="t" style="left:163.70px;top:274.22px;font-size:9.9px;color:#fff;font-weight:normal;transform:scaleX(0.935);transform-origin:0 0;-webkit-text-stroke:0.28px #fff">Números do WhastApp</div>
<svg class="a" style="left:150px;top:298.5px" width="12" height="11" viewBox="0 0 12 11"><g fill="#fff"><rect x="0.5" y="1.5" width="1.6" height="1.6"/><rect x="0.5" y="4.8" width="1.6" height="1.6"/><rect x="0.5" y="8.1" width="1.6" height="1.6"/><rect x="3.3" y="1.7" width="8" height="1.2"/><rect x="3.3" y="5" width="8" height="1.2"/><rect x="3.3" y="8.3" width="8" height="1.2"/></g></svg>
<div class="t" style="left:163.70px;top:299.62px;font-size:9.9px;color:#fff;font-weight:normal;transform:scaleX(0.935);transform-origin:0 0;-webkit-text-stroke:0.28px #fff">Serviços</div>
<svg class="a" style="left:148.5px;top:324.1px" width="12" height="11" viewBox="0 0 12 11"><path d="M3 2.5 L0.6 5.5 L3 8.5 M9 2.5 L11.4 5.5 L9 8.5 M7.2 1.5 L4.8 9.5" fill="none" stroke="#fff" stroke-width="0.9"/></svg>
<div class="t" style="left:163.70px;top:325.22px;font-size:9.9px;color:#fff;font-weight:normal;transform:scaleX(0.935);transform-origin:0 0;-webkit-text-stroke:0.28px #fff">Configurações da página</div>
<svg class="a" style="left:149.5px;top:349.4px" width="12" height="11" viewBox="0 0 12 11"><path d="M1.5 10 L6.2 5.3" stroke="#fff" stroke-width="2" stroke-linecap="round"/><path d="M5.5 4.5 A3 3 0 0 1 9.8 1 L8.2 2.6 L8.6 3.8 L9.8 4.2 L11.3 2.6 A3 3 0 0 1 7.3 6.4 Z" fill="#fff"/></svg>
<div class="t" style="left:163.70px;top:350.52px;font-size:9.9px;color:#fff;font-weight:normal;transform:scaleX(0.935);transform-origin:0 0;-webkit-text-stroke:0.28px #fff">Configurações Gerais</div>
<svg class="a" style="left:149.5px;top:374.7px" width="12" height="11" viewBox="0 0 12 11"><circle cx="6" cy="5.5" r="5" fill="#fff"/><path d="M3.5 5.6 L5.3 7.3 L8.5 4" fill="none" stroke="#343a40" stroke-width="1.3"/></svg>
<div class="t" style="left:163.70px;top:375.82px;font-size:9.9px;color:#fff;font-weight:normal;transform:scaleX(0.935);transform-origin:0 0;-webkit-text-stroke:0.28px #fff">Funções</div>
<svg class="a" style="left:149px;top:400.2px" width="12" height="11" viewBox="0 0 12 11"><circle cx="6" cy="3.3" r="2.2" fill="#fff"/><circle cx="2.6" cy="4.2" r="1.7" fill="#fff"/><circle cx="9.4" cy="4.2" r="1.7" fill="#fff"/><path d="M2.5 9.5 Q3 6 6 6 Q9 6 9.5 9.5 Z M0 8.7 Q0.3 6.5 2.6 6.4 Q3.3 6.5 3.6 6.8 L2 8.7 Z M12 8.7 Q11.7 6.5 9.4 6.4 Q8.7 6.5 8.4 6.8 L10 8.7 Z" fill="#fff"/></svg>
<div class="t" style="left:163.70px;top:401.32px;font-size:9.9px;color:#fff;font-weight:normal;transform:scaleX(0.935);transform-origin:0 0;-webkit-text-stroke:0.28px #fff">Usuários</div>
<svg class="a" style="left:150px;top:459.5px" width="12" height="11" viewBox="0 0 12 11"><circle cx="5.5" cy="3" r="2.6" fill="#fff"/><path d="M1 10 Q1 6.2 5.5 6.2 Q10 6.2 10 10 Z" fill="#fff"/></svg>
<div class="t" style="left:163.70px;top:460.62px;font-size:9.9px;color:#fff;font-weight:normal;transform:scaleX(0.935);transform-origin:0 0;-webkit-text-stroke:0.28px #fff">Perfil</div>
<svg class="a" style="left:150px;top:485.1px" width="12" height="11" viewBox="0 0 12 11"><path d="M3 5 L3 3.3 Q3 0.8 5.5 0.8 Q8 0.8 8 3.3 L8 5" fill="none" stroke="#fff" stroke-width="1.3"/><rect x="1.5" y="5" width="8" height="5.8" rx="0.8" fill="#fff"/></svg>
<div class="t" style="left:163.70px;top:486.22px;font-size:9.9px;color:#fff;font-weight:normal;transform:scaleX(0.935);transform-origin:0 0;-webkit-text-stroke:0.28px #fff">Mudar Senha</div>
<svg class="a" style="left:270px;top:327.1px" width="7" height="7" viewBox="0 0 7 7"><path d="M5 1 L2.2 3.5 L5 6" fill="none" stroke="#fff" stroke-width="1.4"/></svg>
<svg class="a" style="left:270px;top:352.4px" width="7" height="7" viewBox="0 0 7 7"><path d="M5 1 L2.2 3.5 L5 6" fill="none" stroke="#fff" stroke-width="1.4"/></svg>
<div class="t" style="left:148.60px;top:437.70px;font-size:8.5px;color:#e8e8e8;font-weight:bold;letter-spacing:-0.25px">Configurações da Conta</div>
</div></div>
</body></html>
